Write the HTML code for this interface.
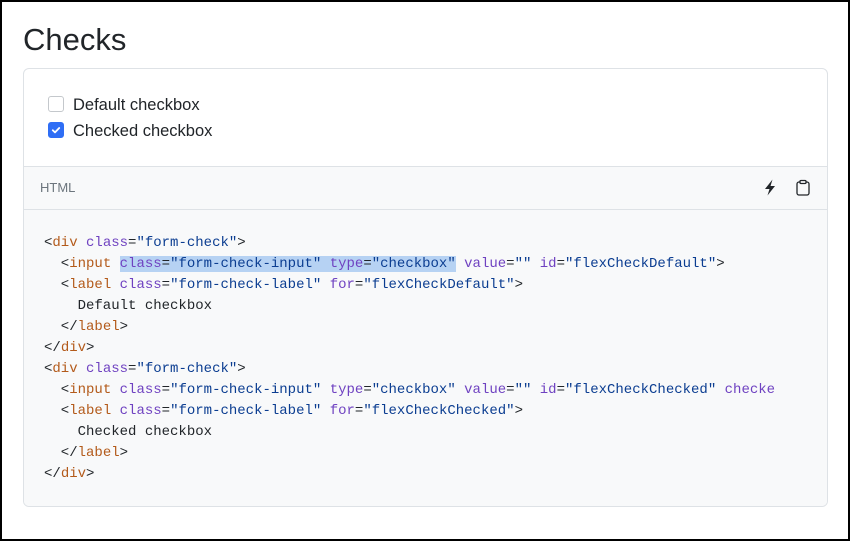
<!DOCTYPE html>
<html><head><style>
body{margin:0;width:850px;height:541px;overflow:hidden;background:#fff;font-family:"Liberation Sans",sans-serif;}
.frame{position:absolute;left:0;top:0;width:846px;height:537px;border:2px solid #000;}
h1{position:absolute;left:23px;top:22px;margin:0;font-size:31px;font-weight:500;color:#212529;}
.card{position:absolute;left:23px;top:68px;width:803px;height:437px;border:1px solid #dee2e6;border-radius:6px;overflow:hidden;}
.demo{height:97px;border-bottom:1px solid #dee2e6;position:relative;}
.chk{position:absolute;left:24px;font-size:16.5px;color:#212529;}
.box{display:inline-block;width:14px;height:14px;border:1px solid #c4c8cc;border-radius:3px;vertical-align:-2px;margin-right:9px;background:#fff}
.box.on{background:#2f6ef5;border-color:#2f6ef5;position:relative}
.hdr{height:42px;background:#f8f9fa;border-bottom:1px solid #dee2e6;position:relative;}
.hdr span{position:absolute;left:16px;top:13px;font-size:13px;color:#6c757d;}
.code{background:#f8f9fa;height:296px;position:relative;}
pre{margin:0;position:absolute;left:20px;top:23px;font-family:"Liberation Mono",monospace;font-size:14px;line-height:21px;color:#212529;}
.t{color:#b35a1a}.a{color:#6f42c1}.s{color:#0b3d91}
.hl{background:#b6d2f3}
</style></head><body>
<div class="frame"></div>
<h1>Checks</h1>
<div class="card">
<div class="demo">
<div class="chk" style="top:27px"><span class="box"></span>Default checkbox</div>
<div class="chk" style="top:53px"><span class="box on"><svg width="14" height="14" viewBox="0 0 14 14" style="position:absolute;left:0;top:0"><path d="M3.8 7.2l2.2 2.2 4.2-4.4" stroke="#fff" stroke-width="1.8" fill="none" stroke-linecap="round" stroke-linejoin="round"/></svg></span>Checked checkbox</div>
</div>
<div class="hdr"><span>HTML</span>
<svg style="position:absolute;left:739px;top:12px" width="14" height="17" viewBox="0 0 14 17"><path d="M9.5 0.5L2 10h4.5l-2 6.5L12 7H7.5z" fill="#212529"/></svg>
<svg style="position:absolute;left:771px;top:12px" width="16" height="18" viewBox="0 0 16 18"><rect x="2" y="3" width="12" height="13" rx="2" fill="none" stroke="#212529" stroke-width="1.3"/><rect x="5" y="1.5" width="6" height="3" rx="1" fill="#f8f9fa" stroke="#212529" stroke-width="1.3"/></svg>
</div>
<div class="code"><pre>&lt;<span class="t">div</span> <span class="a">class</span>=<span class="s">"form-check"</span>&gt;
  &lt;<span class="t">input</span> <span class="hl"><span class="a">class</span>=<span class="s">"form-check-input"</span> <span class="a">type</span>=<span class="s">"checkbox"</span></span> <span class="a">value</span>=<span class="s">""</span> <span class="a">id</span>=<span class="s">"flexCheckDefault"</span>&gt;
  &lt;<span class="t">label</span> <span class="a">class</span>=<span class="s">"form-check-label"</span> <span class="a">for</span>=<span class="s">"flexCheckDefault"</span>&gt;
    Default checkbox
  &lt;/<span class="t">label</span>&gt;
&lt;/<span class="t">div</span>&gt;
&lt;<span class="t">div</span> <span class="a">class</span>=<span class="s">"form-check"</span>&gt;
  &lt;<span class="t">input</span> <span class="a">class</span>=<span class="s">"form-check-input"</span> <span class="a">type</span>=<span class="s">"checkbox"</span> <span class="a">value</span>=<span class="s">""</span> <span class="a">id</span>=<span class="s">"flexCheckChecked"</span> <span class="a">checke</span>
  &lt;<span class="t">label</span> <span class="a">class</span>=<span class="s">"form-check-label"</span> <span class="a">for</span>=<span class="s">"flexCheckChecked"</span>&gt;
    Checked checkbox
  &lt;/<span class="t">label</span>&gt;
&lt;/<span class="t">div</span>&gt;</pre></div>
</div>
</body></html>
